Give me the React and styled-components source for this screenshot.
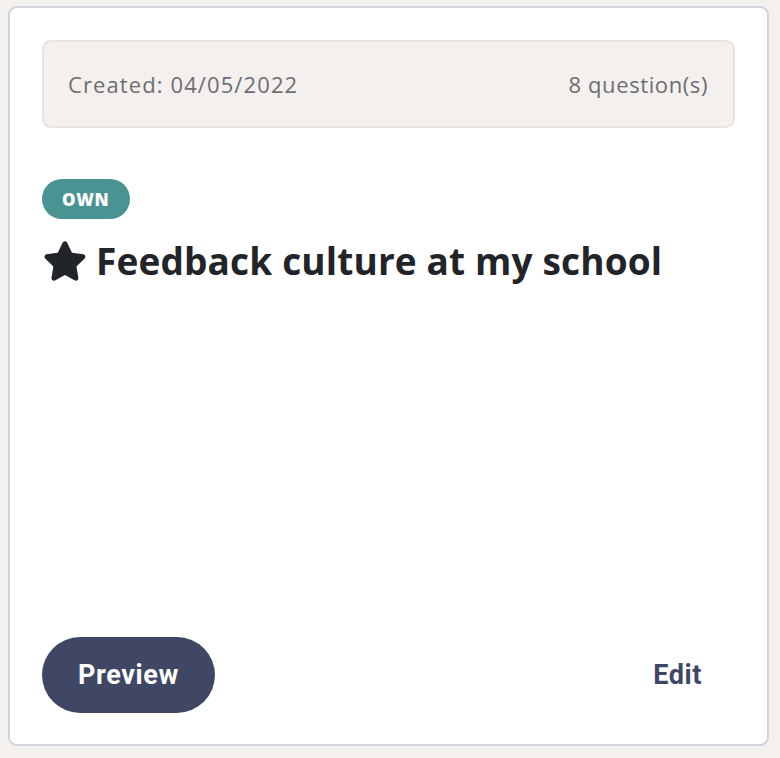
import React from "react";
import styled, { createGlobalStyle } from "styled-components";

const Global = createGlobalStyle`
  html, body { margin: 0; padding: 0; background: #f3f0ed; }
  body { font-family: "Open Sans", "Liberation Sans", sans-serif; }
  * { box-sizing: border-box; }
`;

const Page = styled.div`
  padding: 6px 11px 11px 8px;
`;

const Card = styled.div`
  background: #ffffff;
  border: 2px solid #d1d3dc;
  border-radius: 9px;
  height: 740px;
  padding: 32px 32px 31px 32px;
  display: flex;
  flex-direction: column;
`;

const Info = styled.div`
  background: #f3f0ed;
  border: 2px solid #e8e3df;
  border-radius: 9px;
  height: 88px;
  display: flex;
  align-items: center;
  justify-content: space-between;
  padding: 0 25px 0 24px;
  color: #6e6d74;
  font-size: 22px;
  letter-spacing: 0.6px;
`;

const Created = styled.span`
  letter-spacing: 1.1px;
`;

const Badge = styled.span`
  align-self: flex-start;
  margin-top: 51px;
  height: 40px;
  padding: 0 20px;
  border-radius: 20px;
  background: #4a9393;
  color: #ffffff;
  font-weight: 800;
  font-size: 17px;
  letter-spacing: 0.7px;
  display: inline-flex;
  align-items: center;
`;

const Title = styled.h2`
  margin: 20px 0 0 0;
  display: flex;
  align-items: center;
  gap: 10px;
  font-size: 37px;
  font-weight: 700;
  color: #212428;
  letter-spacing: 0.15px;
  line-height: 1.2;
`;

const StarIcon = styled.svg`
  flex: none;
  margin-left: 2px;
`;

const Spacer = styled.div`
  flex: 1;
`;

const Actions = styled.div`
  display: flex;
  align-items: center;
  justify-content: space-between;
`;

const PrimaryButton = styled.button`
  height: 76px;
  width: 173px;
  border: none;
  border-radius: 38px;
  background: #3f4764;
  color: #ffffff;
  font-family: "Roboto", "Liberation Sans", sans-serif;
  font-weight: 700;
  font-size: 27px;
  letter-spacing: 0.6px;
  cursor: pointer;
`;

const LinkButton = styled.button`
  border: none;
  background: none;
  color: #3f4764;
  font-family: "Roboto", "Liberation Sans", sans-serif;
  font-weight: 700;
  font-size: 27px;
  letter-spacing: 0.6px;
  margin-right: 33px;
  padding: 0;
  cursor: pointer;
`;

const Star = () => (
  <StarIcon width="42" height="40" viewBox="1.3 1.1 21.4 21" fill="#212428">
    <path d="M12 1.2c.5 0 .9.3 1.1.7l2.6 5.4 5.9.8c.5.1.9.4 1 .9.2.5 0 1-.3 1.3l-4.3 4.2 1 5.9c.1.5-.1 1-.5 1.3-.4.3-.9.3-1.3.1L12 19l-5.3 2.8c-.4.2-.9.2-1.3-.1-.4-.3-.6-.8-.5-1.3l1-5.9-4.3-4.2c-.3-.3-.5-.8-.3-1.3.2-.5.6-.8 1-.9l5.9-.8 2.6-5.4c.3-.4.7-.7 1.2-.7z" />
  </StarIcon>
);

export default function App() {
  return (
    <>
      <Global />
      <Page>
        <Card>
          <Info>
            <Created>Created: 04/05/2022</Created>
            <span>8 question(s)</span>
          </Info>
          <Badge>OWN</Badge>
          <Title>
            <Star />
            Feedback culture at my school
          </Title>
          <Spacer />
          <Actions>
            <PrimaryButton>Preview</PrimaryButton>
            <LinkButton>Edit</LinkButton>
          </Actions>
        </Card>
      </Page>
    </>
  );
}
